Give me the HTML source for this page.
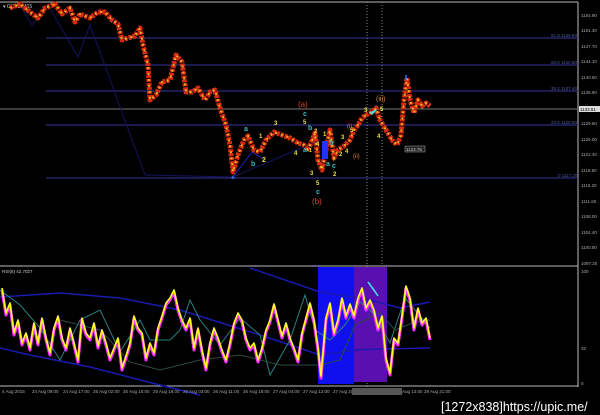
<!DOCTYPE html>
<html><head><meta charset="utf-8"><style>
html,body{margin:0;padding:0;background:#000;width:600px;height:415px;overflow:hidden}
svg{display:block}
text{font-family:"Liberation Sans",sans-serif}
</style></head><body>
<svg width="600" height="415" viewBox="0 0 600 415" xmlns="http://www.w3.org/2000/svg">
<rect width="600" height="415" fill="#000"/>
<line x1="0" y1="2" x2="578" y2="2" fill="none" stroke="#bbb" stroke-width="1"/>
<line x1="578" y1="2" x2="578" y2="387" stroke="#bbb" stroke-width="1"/>
<text x="3" y="8" fill="#ccc" font-size="5">▾ GOLD,M15</text>
<g stroke="#2d2d7a" stroke-width="1.3">
<line x1="46" y1="38" x2="578" y2="38"/>
<line x1="46" y1="65" x2="578" y2="65"/>
<line x1="46" y1="91" x2="578" y2="91"/>
<line x1="46" y1="125" x2="578" y2="125"/>
<line x1="46" y1="178" x2="578" y2="178"/>
</g>
<line x1="0" y1="109" x2="578" y2="109" stroke="#777" stroke-width="1"/>
<g fill="#4a5aa8" font-size="4.5">
<text x="551" y="37">61.8 1149.90</text>
<text x="551" y="64">50.0 1140.60</text>
<text x="551" y="90">38.2 1137.40</text>
<text x="551" y="124">23.6 1129.80</text>
<text x="558" y="177">0 1117.20</text>
</g>
<line x1="367" y1="2" x2="367" y2="387" stroke="#888" stroke-dasharray="1,2"/>
<line x1="382" y1="2" x2="382" y2="265" stroke="#888" stroke-dasharray="1,2"/>
<polyline points="20,5 32,25 48,5 78,57 90,25 145,175 233,177 320,140" fill="none" stroke="#141460" stroke-width="1"/>
<polyline points="233,177 252,152 265,160" fill="none" stroke="#2222bb" stroke-width="1"/>
<!-- price -->
<g id="pr">
<polyline points="10,8 20,4 30,12 38,18 45,8 55,4 62,14 70,8 75,22 80,14 90,18 98,12 105,12 112,20 118,24 122,40 128,38 135,36 140,28 143,45 148,65 150,100 156,95 162,82 170,80 176,55 182,62 186,92 192,92 198,88 205,100 210,92 215,90 220,108 226,125 230,145 233,172 238,155 244,140 248,136 254,150 260,152 266,140 274,132 282,135 290,138 298,143 304,145 308,150 315,133 318,160 322,170 326,150 330,130 334,158 338,150 344,146 350,140 354,130 358,125 362,118 366,115 372,112 376,108 380,120 386,130 392,140 397,145 401,135 404,100 407,78 410,100 414,113 418,100 422,106 426,103 430,106" fill="none" stroke="#d82a10" stroke-width="5" stroke-linejoin="round" stroke-dasharray="3,1"/>
<polyline points="10,8 20,4 30,12 38,18 45,8 55,4 62,14 70,8 75,22 80,14 90,18 98,12 105,12 112,20 118,24 122,40 128,38 135,36 140,28 143,45 148,65 150,100 156,95 162,82 170,80 176,55 182,62 186,92 192,92 198,88 205,100 210,92 215,90 220,108 226,125 230,145 233,172 238,155 244,140 248,136 254,150 260,152 266,140 274,132 282,135 290,138 298,143 304,145 308,150 315,133 318,160 322,170 326,150 330,130 334,158 338,150 344,146 350,140 354,130 358,125 362,118 366,115 372,112 376,108 380,120 386,130 392,140 397,145 401,135 404,100 407,78 410,100 414,113 418,100 422,106 426,103 430,106" fill="none" stroke="#f5b020" stroke-width="2" stroke-dasharray="2,4"/>
</g>
<g font-size="7" font-weight="bold">
<text x="244" y="131" fill="#3fb8c0">a</text>
<text x="251" y="166" fill="#3fb8c0">b</text>
<text x="262" y="162" fill="#e8e040">2</text>
<text x="259" y="138" fill="#e8e040" font-size="6">1</text>
<text x="274" y="125" fill="#e8e040" font-size="6">3</text>
<text x="294" y="155" fill="#e8e040" font-size="6">4</text>
<text x="298" y="107" fill="#e04020" font-size="8" font-weight="normal">(a)</text>
<text x="303" y="116" fill="#3fb8c0">c</text>
<text x="303" y="124" fill="#e8e040" font-size="6">5</text>
<text x="308" y="130" fill="#3fb8c0">b</text>
<text x="314" y="133" fill="#e8e040" font-size="6">2</text>
<text x="303" y="152" fill="#3fb8c0">a</text>
<text x="309" y="152" fill="#e8e040" font-size="5">1</text>
<text x="316" y="146" fill="#e8e040" font-size="6">4</text>
<text x="310" y="175" fill="#e8e040" font-size="6">3</text>
<text x="316" y="185" fill="#e8e040" font-size="6">5</text>
<text x="316" y="194" fill="#3fb8c0">c</text>
<text x="312" y="204" fill="#e04020" font-size="8" font-weight="normal">(b)</text>
<text x="323" y="136" fill="#e8e040" font-size="6">1</text>
<text x="329" y="145" fill="#3fb8c0">b</text>
<text x="326" y="166" fill="#3fb8c0">a</text>
<text x="332" y="168" fill="#3fb8c0">c</text>
<text x="333" y="176" fill="#e8e040" font-size="6">2</text>
<text x="339" y="156" fill="#e8e040" font-size="6">2</text>
<text x="341" y="139" fill="#e8e040" font-size="6">3</text>
<text x="345" y="153" fill="#e8e040" font-size="6">4</text>
<text x="350" y="132" fill="#e8e040" font-size="6">5</text>
<text x="347" y="128" fill="#e08030" font-size="6" font-weight="normal">(i)</text>
<text x="353" y="158" fill="#e08030" font-size="6" font-weight="normal">(ii)</text>
<text x="364" y="112" fill="#e8e040" font-size="6">3</text>
<text x="376" y="101" fill="#e08030" font-size="7" font-weight="normal">(iii)</text>
<text x="380" y="111" fill="#e8e040" font-size="6">5</text>
<text x="377" y="138" fill="#e8e040" font-size="6">4</text>
</g>
<rect x="322" y="141" width="6" height="18" fill="#2233ff"/>
<polygon points="370,112 378,109 372,115" fill="#40e0f0"/>
<text x="230" y="180" fill="#3a6ae0" font-size="7">✦</text>
<text x="403" y="80" fill="#3a6ae0" font-size="7">⬇</text>
<rect x="405" y="146" width="20" height="6" fill="#222" stroke="#aaa" stroke-width="0.5"/>
<text x="406" y="151" fill="#ccc" font-size="4.5">1123.76</text>
<g fill="#aaa" font-size="4.5">
<text x="581" y="17">1154.90</text><text x="581" y="32">1151.30</text><text x="581" y="48">1147.70</text>
<text x="581" y="63">1144.10</text><text x="581" y="79">1140.50</text><text x="581" y="94">1136.90</text>
<text x="581" y="125">1129.60</text><text x="581" y="141">1126.00</text><text x="581" y="156">1122.40</text>
<text x="581" y="172">1118.80</text><text x="581" y="187">1115.20</text><text x="581" y="203">1111.60</text>
<text x="581" y="218">1108.00</text><text x="581" y="234">1104.40</text><text x="581" y="249">1100.80</text>
<text x="581" y="265">1097.20</text>
<text x="581" y="273">100</text><text x="581" y="350">32</text><text x="581" y="385">0</text>
</g>
<rect x="579" y="106" width="21" height="6" fill="#ddd"/>
<text x="580" y="111" fill="#000" font-size="4.5">1133.51</text>
<line x1="0" y1="266" x2="578" y2="266" stroke="#bbb"/>
<line x1="0" y1="386" x2="578" y2="386" stroke="#bbb"/>
<rect x="318" y="267" width="36" height="117" fill="#1010ee"/>
<rect x="354" y="267" width="33" height="115" fill="#5a10b0"/>
<text x="2" y="273" fill="#ccc" font-size="4.5">RSI(8) 42.7027</text>
<polyline points="0,297 60,293 120,298 180,310 260,335 320,355 354,350 380,349 430,348" fill="none" stroke="#1a1ab0" stroke-width="1.5"/>
<polyline points="0,348 30,355 90,367 160,385 200,395" fill="none" stroke="#1a1ab0" stroke-width="1.5"/>
<polyline points="250,268 320,292 370,300 400,308 430,302" fill="none" stroke="#1a1ab0" stroke-width="1.5"/>
<polyline points="0,290 20,305 40,328 60,360 80,320 100,310 120,352 140,320 150,340 170,340 180,330 190,300 200,320 220,345 240,318 260,335 270,375 290,340 305,295 315,330 330,340 345,325 360,302 372,312 390,343 405,298 430,328" fill="none" stroke="#2a8080" stroke-width="1"/>
<polyline points="60,320 100,330 130,362 160,370 200,360 240,355 280,365 320,365 340,360 355,325 380,313 395,330 415,322 430,320" fill="none" stroke="#2a4a40" stroke-width="1"/>
<polyline points="2,290 6,315 10,305 14,335 18,322 22,345 26,335 30,350 34,325 38,345 42,320 46,340 50,355 54,330 58,318 62,340 66,350 70,330 74,345 78,362 82,320 86,335 90,340 94,325 98,348 102,332 106,345 110,360 114,350 118,340 122,370 126,358 130,345 134,318 138,330 142,335 146,360 150,345 154,355 158,330 162,318 166,305 170,300 174,292 178,310 182,322 186,330 190,320 194,350 198,330 202,352 206,370 210,345 214,330 218,340 222,352 226,362 230,345 234,325 238,315 242,322 246,340 250,350 254,345 258,362 262,350 266,332 270,322 274,306 278,322 282,338 286,325 290,340 294,350 298,362 302,335 306,320 310,305 314,322 318,350 321,378 326,320 330,305 334,335 338,322 342,300 346,318 350,306 354,318 358,300 362,290 366,310 370,302 374,312 378,330 382,318 386,360 390,375 394,340 398,345 402,318 406,288 410,300 414,330 418,310 422,325 426,320 430,340" fill="none" stroke="#ff30ff" stroke-width="3" stroke-linejoin="round"/>
<polyline points="2,290 6,315 10,305 14,335 18,322 22,345 26,335 30,350 34,325 38,345 42,320 46,340 50,355 54,330 58,318 62,340 66,350 70,330 74,345 78,362 82,320 86,335 90,340 94,325 98,348 102,332 106,345 110,360 114,350 118,340 122,370 126,358 130,345 134,318 138,330 142,335 146,360 150,345 154,355 158,330 162,318 166,305 170,300 174,292 178,310 182,322 186,330 190,320 194,350 198,330 202,352 206,370 210,345 214,330 218,340 222,352 226,362 230,345 234,325 238,315 242,322 246,340 250,350 254,345 258,362 262,350 266,332 270,322 274,306 278,322 282,338 286,325 290,340 294,350 298,362 302,335 306,320 310,305 314,322 318,350 321,378 326,320 330,305 334,335 338,322 342,300 346,318 350,306 354,318 358,300 362,290 366,310 370,302 374,312 378,330 382,318 386,360 390,375 394,340 398,345 402,318 406,288 410,300 414,330 418,310 422,325 426,320 430,340" fill="none" stroke="#ffff20" stroke-width="1.6" stroke-linejoin="round" transform="translate(0,-2)"/>
<polygon points="368,282 378,296 374,290" fill="#40e0f0" stroke="#40e0f0" stroke-width="1.5"/>
<g fill="#aaa" font-size="4.5">
<text x="2" y="393">4 Aug 2015</text><text x="32" y="393">24 Aug 09:00</text><text x="63" y="393">24 Aug 17:00</text>
<text x="93" y="393">25 Aug 02:00</text><text x="123" y="393">25 Aug 10:00</text><text x="153" y="393">25 Aug 18:00</text>
<text x="183" y="393">26 Aug 03:00</text><text x="213" y="393">26 Aug 11:00</text><text x="243" y="393">26 Aug 19:00</text>
<text x="273" y="393">27 Aug 04:00</text><text x="303" y="393">27 Aug 12:00</text><text x="333" y="393">27 Aug 20:00</text>
<text x="402" y="393">Aug 13:00</text><text x="424" y="393">28 Aug 21:00</text>
</g>
<rect x="352" y="388" width="50" height="7" fill="#555"/>
<text x="441" y="411" fill="#fff" font-size="12.5" font-family="Liberation Mono,monospace">[1272x838]https://upic.me/</text>
</svg>
</body></html>
